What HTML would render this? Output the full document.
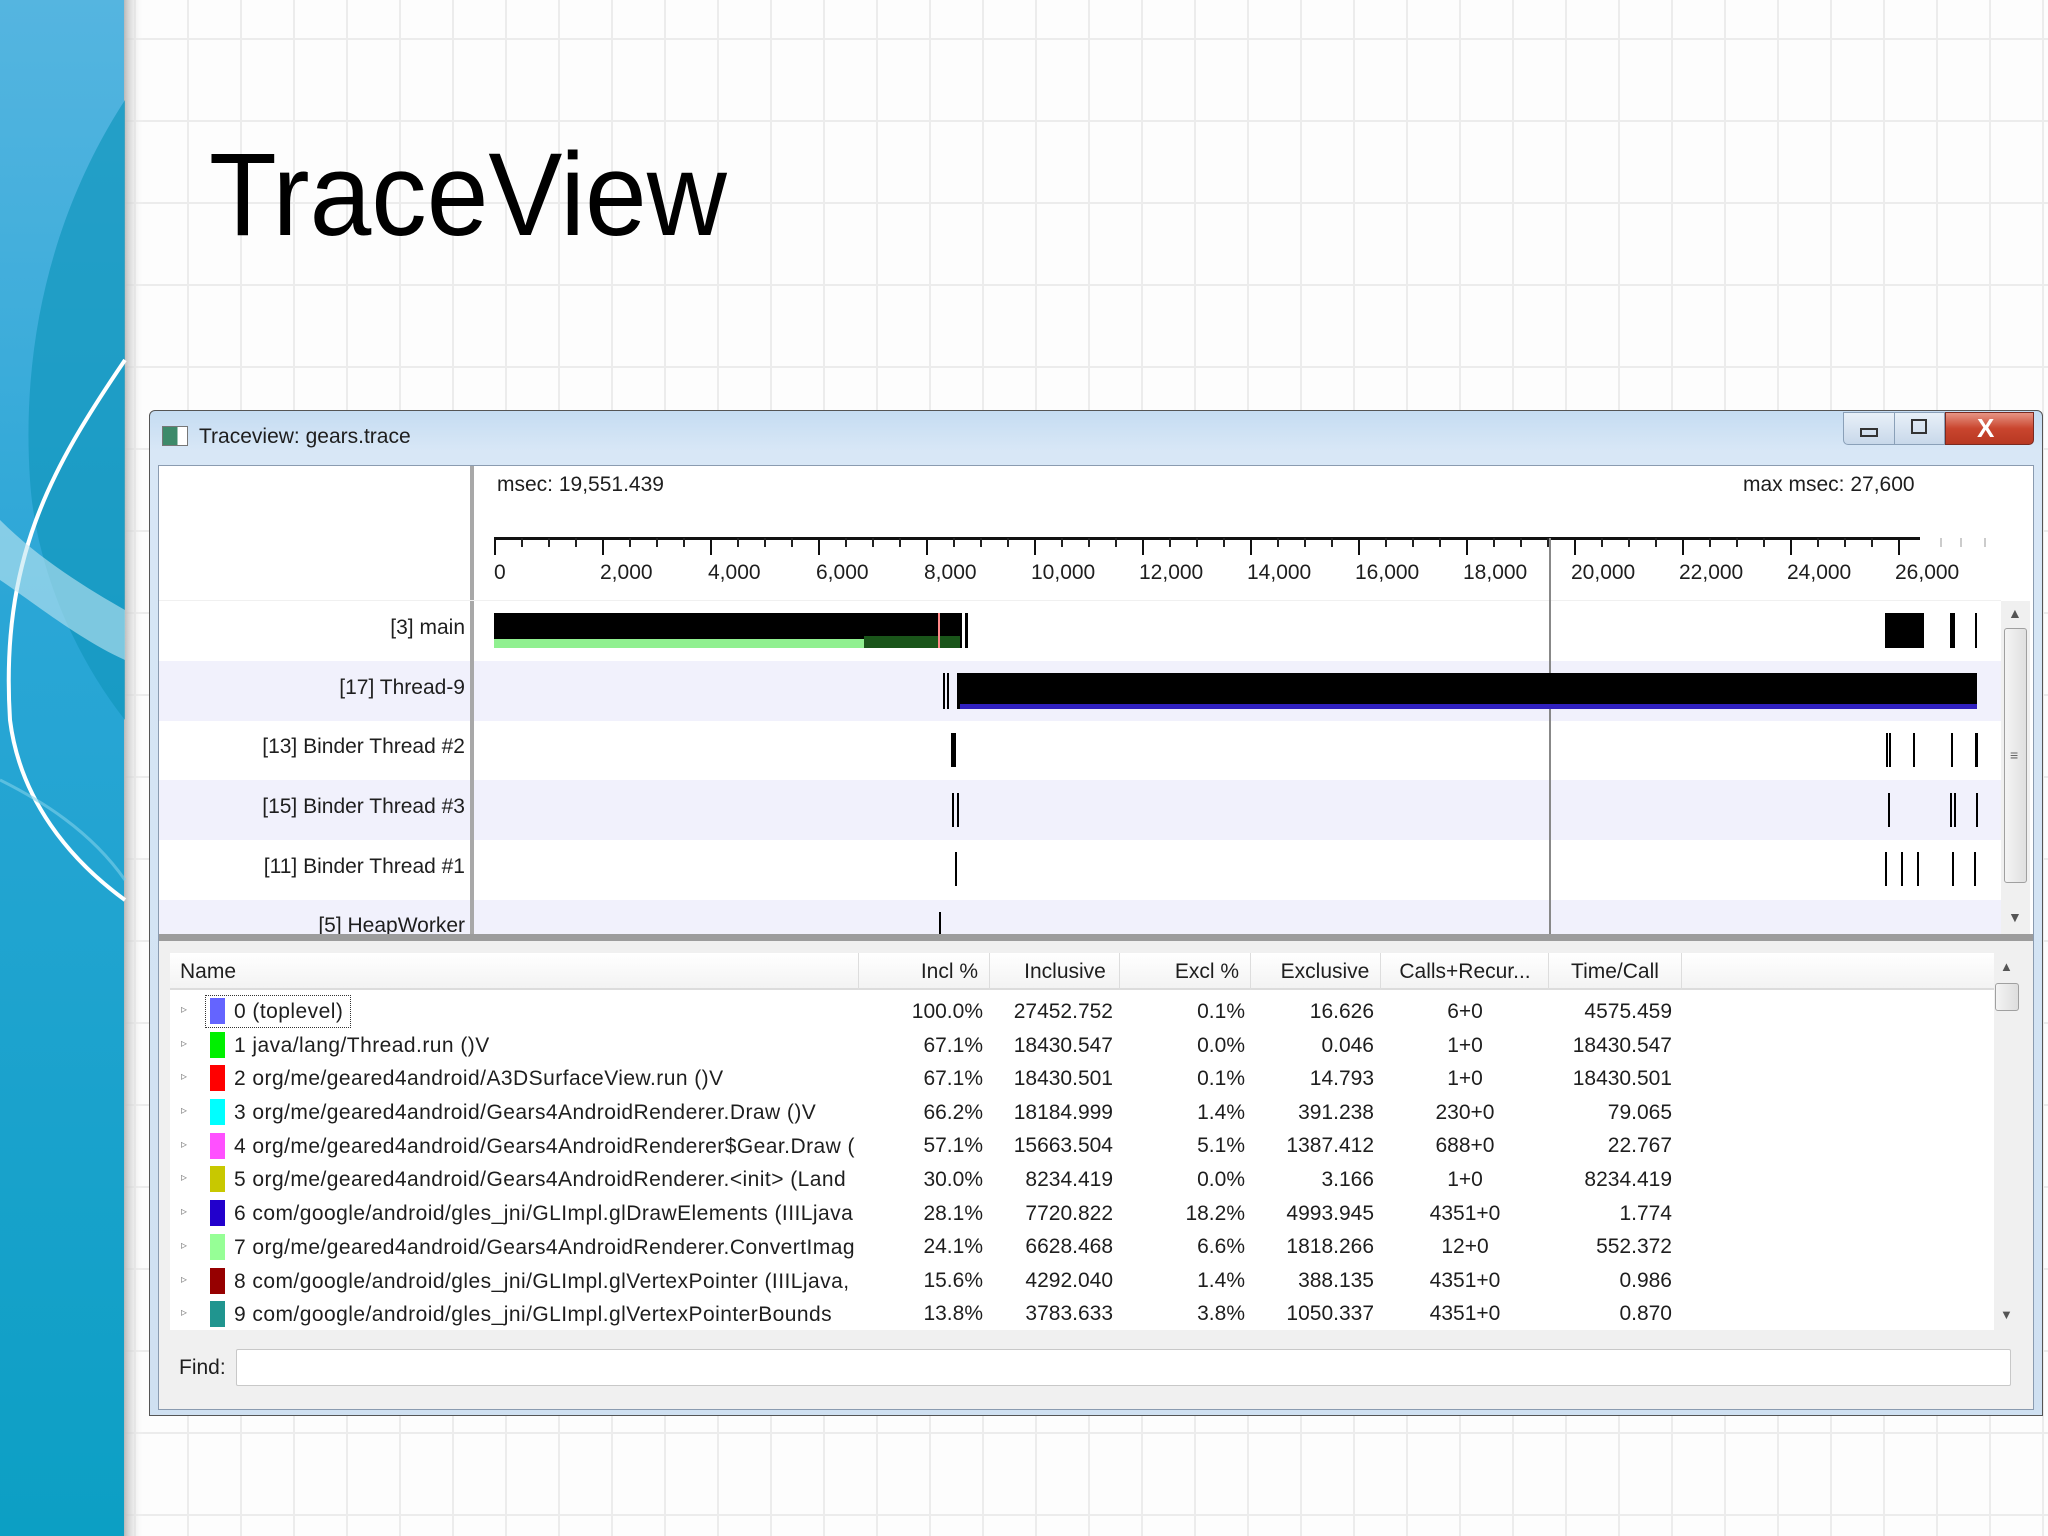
<!DOCTYPE html>
<html><head><meta charset="utf-8"><style>
*{margin:0;padding:0;box-sizing:border-box}
body{width:2048px;height:1536px;position:relative;overflow:hidden;font-family:"Liberation Sans",sans-serif;color:#1e1e1e;
background-color:#fdfdfd;
background-image:linear-gradient(90deg,#ececec 2px,transparent 2px),linear-gradient(0deg,#ececec 2px,transparent 2px);
background-size:53px 82px;background-position:28px 40px}
.a{position:absolute}
.t{position:absolute;font-size:21px;white-space:nowrap;line-height:1}
.r{text-align:right}
.c{text-align:center}
.nm{letter-spacing:.45px}
</style></head><body>
<svg class="a" style="left:0;top:0" width="145" height="1536">
<defs>
<linearGradient id="bg" x1="0" y1="0" x2="0" y2="1"><stop offset="0" stop-color="#55b5e0"/><stop offset=".4" stop-color="#2aa6d6"/><stop offset="1" stop-color="#0c9fc4"/></linearGradient>
<linearGradient id="sh" x1="0" y1="0" x2="1" y2="0"><stop offset="0" stop-color="#bbb"/><stop offset="1" stop-color="#fdfdfd" stop-opacity="0"/></linearGradient>
</defs>
<rect width="125" height="1536" fill="url(#bg)"/>
<rect x="124" width="20" height="1536" fill="url(#sh)"/>
<path d="M125 100 C60 200 20 330 30 480 C35 560 70 650 125 720 L125 100Z" fill="#1297bd" opacity=".7"/>
<path d="M125 360 C50 470 0 560 10 720 C20 800 70 860 125 900" stroke="#fff" stroke-width="4" fill="none"/>
<path d="M0 520 C40 560 90 590 125 610 L125 660 C80 640 30 600 0 580Z" fill="#bfe6f2" opacity=".6"/>
<path d="M125 880 C90 830 40 800 0 780" stroke="#7fd0ea" stroke-width="3" fill="none" opacity=".6"/>
</svg>
<div class="a" style="left:209px;top:136px;font-size:118px;line-height:1;transform:scaleX(.94);transform-origin:left;color:#000">TraceView</div>

<div class="a" style="left:149px;top:410px;width:1894px;height:1006px;background:linear-gradient(#c5dcf2,#d8e7f6 40px,#cfe0f1);border:1px solid #555;border-radius:6px 6px 0 0"></div>
<div class="a" style="left:162px;top:426px;width:26px;height:20px;border:1px solid #777;background:linear-gradient(90deg,#3d8a6a 60%,#fff 60%)"></div>
<div class="t" style="left:199px;top:426px">Traceview: gears.trace</div>
<div class="a" style="left:1843px;top:412px;width:102px;height:33px;border:1px solid #8aa0b8;border-radius:0 0 0 5px;background:linear-gradient(#e8f0f8,#c8d8ea)"></div>
<div class="a" style="left:1894px;top:412px;width:1px;height:33px;background:#8aa0b8"></div>
<div class="a" style="left:1860px;top:428px;width:18px;height:9px;border:2px solid #333"></div>
<div class="a" style="left:1911px;top:419px;width:16px;height:15px;border:2px solid #333"></div>
<div class="a" style="left:1945px;top:412px;width:89px;height:33px;border:1px solid #7a2a20;border-radius:0 0 5px 0;background:linear-gradient(#e79585,#c9452e 50%,#b83822)"></div>
<div class="a" style="left:1977px;top:413px;font-size:26px;font-weight:bold;color:#fff">X</div>

<div class="a" style="left:158px;top:465px;width:1876px;height:945px;background:#f0f0f0;border:1px solid #8a9bb0"></div>
<div class="a" style="left:159px;top:466px;width:1874px;height:468px;background:#fff"></div>
<div class="a" style="left:159px;top:661px;width:1842px;height:60px;background:#f1f1fc"></div>
<div class="a" style="left:159px;top:780px;width:1842px;height:60px;background:#f1f1fc"></div>
<div class="a" style="left:159px;top:900px;width:1842px;height:34px;background:#f1f1fc"></div>
<div class="a" style="left:470px;top:466px;width:4px;height:468px;background:#a8a8a8"></div>
<div class="a" style="left:159px;top:600px;width:1842px;height:1px;background:#f0f0f0"></div>

<div class="t" style="left:497px;top:474px">msec: 19,551.439</div>
<div class="t" style="left:1743px;top:474px">max msec: 27,600</div>

<svg class="a" style="left:0;top:0" width="2048" height="940">
<defs>
<pattern id="mn" x="494" y="0" width="27" height="10" patternUnits="userSpaceOnUse"><rect width="2" height="10" fill="#222"/></pattern>
<pattern id="mj" x="494" y="0" width="108" height="20" patternUnits="userSpaceOnUse"><rect width="2" height="20" fill="#111"/></pattern>
</defs>
<rect x="494" y="537" width="1426" height="3" fill="#111"/>
<rect x="494" y="538" width="1426" height="9" fill="url(#mn)"/>
<rect x="494" y="538" width="1406" height="17" fill="url(#mj)"/>
<g fill="#ccc"><rect x="1940" y="538" width="2" height="9"/><rect x="1960" y="538" width="2" height="9"/><rect x="1984" y="538" width="2" height="9"/></g>
<rect x="1549" y="538" width="2" height="397" fill="#888"/>
<rect x="494" y="613" width="468" height="35" fill="#000"/>
<rect x="494" y="639" width="370" height="9" fill="#90f090"/>
<rect x="864" y="636" width="96" height="12" fill="#3a3" opacity=".5"/>
<rect x="938" y="613" width="2" height="35" fill="#f88"/>
<rect x="965" y="613" width="3" height="35" fill="#000"/>
<rect x="1885" y="613" width="39" height="35" fill="#000"/>
<rect x="1950" y="613" width="5" height="35" fill="#000"/>
<rect x="1975" y="613" width="2" height="35" fill="#000"/>
<rect x="943" y="673" width="2" height="36" fill="#000"/><rect x="947" y="673" width="2" height="36" fill="#000"/>
<rect x="957" y="673" width="1020" height="36" fill="#000"/>
<rect x="960" y="704" width="1017" height="5" fill="#3020c0"/>
<rect x="951" y="733" width="5" height="34" fill="#000"/>
<g fill="#000"><rect x="1886" y="733" width="2" height="34"/><rect x="1889" y="733" width="2" height="34"/><rect x="1913" y="733" width="2" height="34"/><rect x="1951" y="733" width="2" height="34"/><rect x="1975" y="733" width="3" height="34"/></g>
<g fill="#000"><rect x="952" y="793" width="2" height="34"/><rect x="957" y="793" width="2" height="34"/><rect x="1888" y="793" width="2" height="34"/><rect x="1950" y="793" width="2" height="34"/><rect x="1954" y="793" width="2" height="34"/><rect x="1976" y="793" width="2" height="34"/></g>
<g fill="#000"><rect x="955" y="852" width="2" height="34"/><rect x="1885" y="852" width="2" height="34"/><rect x="1901" y="852" width="2" height="34"/><rect x="1917" y="852" width="2" height="34"/><rect x="1952" y="852" width="2" height="34"/><rect x="1974" y="852" width="2" height="34"/></g>
<rect x="939" y="912" width="2" height="22" fill="#000"/>
</svg>
<div class="t" style="left:494px;top:562px">0</div>
<div class="t" style="left:600px;top:562px">2,000</div>
<div class="t" style="left:708px;top:562px">4,000</div>
<div class="t" style="left:816px;top:562px">6,000</div>
<div class="t" style="left:924px;top:562px">8,000</div>
<div class="t" style="left:1031px;top:562px">10,000</div>
<div class="t" style="left:1139px;top:562px">12,000</div>
<div class="t" style="left:1247px;top:562px">14,000</div>
<div class="t" style="left:1355px;top:562px">16,000</div>
<div class="t" style="left:1463px;top:562px">18,000</div>
<div class="t" style="left:1571px;top:562px">20,000</div>
<div class="t" style="left:1679px;top:562px">22,000</div>
<div class="t" style="left:1787px;top:562px">24,000</div>
<div class="t" style="left:1895px;top:562px">26,000</div>

<div class="t r" style="left:200px;width:265px;top:617px">[3] main</div>
<div class="t r" style="left:200px;width:265px;top:677px">[17] Thread-9</div>
<div class="t r" style="left:200px;width:265px;top:736px">[13] Binder Thread #2</div>
<div class="t r" style="left:200px;width:265px;top:796px">[15] Binder Thread #3</div>
<div class="t r" style="left:200px;width:265px;top:856px">[11] Binder Thread #1</div>
<div class="t r" style="left:200px;width:265px;top:915px">[5] HeapWorker</div>

<div class="a" style="left:2001px;top:601px;width:29px;height:333px;background:#f0f0f0"></div>
<div class="a" style="left:2004px;top:628px;width:23px;height:255px;border:1px solid #a0a0a0;border-radius:3px;background:linear-gradient(90deg,#f4f4f4,#e0e0e0)"></div>
<div class="t" style="left:2008px;top:606px;font-size:14px;color:#555">▲</div>
<div class="t" style="left:2008px;top:910px;font-size:14px;color:#555">▼</div>
<div class="t" style="left:2010px;top:748px;font-size:14px;color:#666">≡</div>

<div class="a" style="left:159px;top:934px;width:1874px;height:7px;background:#9c9c9c"></div>

<div class="a" style="left:170px;top:953px;width:1824px;height:377px;background:#fff"></div>
<div class="a" style="left:170px;top:953px;width:1824px;height:37px;background:linear-gradient(#fff,#f3f3f3);border-bottom:2px solid #dcdcdc"></div>
<div class="a" style="left:858px;top:953px;width:1px;height:37px;background:#ddd"></div>
<div class="a" style="left:989px;top:953px;width:1px;height:37px;background:#ddd"></div>
<div class="a" style="left:1119px;top:953px;width:1px;height:37px;background:#ddd"></div>
<div class="a" style="left:1250px;top:953px;width:1px;height:37px;background:#ddd"></div>
<div class="a" style="left:1380px;top:953px;width:1px;height:37px;background:#ddd"></div>
<div class="a" style="left:1548px;top:953px;width:1px;height:37px;background:#ddd"></div>
<div class="a" style="left:1681px;top:953px;width:1px;height:37px;background:#ddd"></div>
<div class="t" style="left:180px;top:961px">Name</div>
<div class="t r" style="left:880px;width:98px;top:961px">Incl %</div>
<div class="t c" style="left:995px;width:140px;top:961px">Inclusive</div>
<div class="t r" style="left:1130px;width:109px;top:961px">Excl %</div>
<div class="t c" style="left:1260px;width:130px;top:961px">Exclusive</div>
<div class="t c" style="left:1382px;width:166px;top:961px">Calls+Recur...</div>
<div class="t c" style="left:1550px;width:130px;top:961px">Time/Call</div>

<div class="a" style="left:205px;top:995px;width:146px;height:33px;border:1px dotted #333"></div>

<div class="a" style="left:170px;top:994px;width:688px;height:340px;overflow:hidden">
<div class="t" style="left:11px;top:9px;font-size:12px;color:#888">▹</div><div class="a" style="left:40px;top:4px;width:15px;height:26px;background:#6464ff"></div><div class="t nm" style="left:64px;top:7px">0 (toplevel)</div>
<div class="t" style="left:11px;top:43px;font-size:12px;color:#888">▹</div><div class="a" style="left:40px;top:38px;width:15px;height:26px;background:#00f000"></div><div class="t nm" style="left:64px;top:41px">1 java/lang/Thread.run ()V</div>
<div class="t" style="left:11px;top:76px;font-size:12px;color:#888">▹</div><div class="a" style="left:40px;top:71px;width:15px;height:26px;background:#ff0000"></div><div class="t nm" style="left:64px;top:74px">2 org/me/geared4android/A3DSurfaceView.run ()V</div>
<div class="t" style="left:11px;top:110px;font-size:12px;color:#888">▹</div><div class="a" style="left:40px;top:105px;width:15px;height:26px;background:#00ffff"></div><div class="t nm" style="left:64px;top:108px">3 org/me/geared4android/Gears4AndroidRenderer.Draw ()V</div>
<div class="t" style="left:11px;top:144px;font-size:12px;color:#888">▹</div><div class="a" style="left:40px;top:139px;width:15px;height:26px;background:#ff50ff"></div><div class="t nm" style="left:64px;top:142px">4 org/me/geared4android/Gears4AndroidRenderer$Gear.Draw (</div>
<div class="t" style="left:11px;top:177px;font-size:12px;color:#888">▹</div><div class="a" style="left:40px;top:172px;width:15px;height:26px;background:#c8c800"></div><div class="t nm" style="left:64px;top:175px">5 org/me/geared4android/Gears4AndroidRenderer.&lt;init&gt; (Land</div>
<div class="t" style="left:11px;top:211px;font-size:12px;color:#888">▹</div><div class="a" style="left:40px;top:206px;width:15px;height:26px;background:#2200cc"></div><div class="t nm" style="left:64px;top:209px">6 com/google/android/gles_jni/GLImpl.glDrawElements (IIILjava</div>
<div class="t" style="left:11px;top:245px;font-size:12px;color:#888">▹</div><div class="a" style="left:40px;top:240px;width:15px;height:26px;background:#96ff96"></div><div class="t nm" style="left:64px;top:243px">7 org/me/geared4android/Gears4AndroidRenderer.ConvertImag</div>
<div class="t" style="left:11px;top:279px;font-size:12px;color:#888">▹</div><div class="a" style="left:40px;top:274px;width:15px;height:26px;background:#960000"></div><div class="t nm" style="left:64px;top:277px">8 com/google/android/gles_jni/GLImpl.glVertexPointer (IIILjava,</div>
<div class="t" style="left:11px;top:312px;font-size:12px;color:#888">▹</div><div class="a" style="left:40px;top:307px;width:15px;height:26px;background:#20958f"></div><div class="t nm" style="left:64px;top:310px">9 com/google/android/gles_jni/GLImpl.glVertexPointerBounds</div>
</div>
<div class="a" style="left:0;top:988px;width:2048px">
<div class="t r" style="left:880px;width:103px;top:7px;line-height:1.6;">100.0%<br>67.1%<br>67.1%<br>66.2%<br>57.1%<br>30.0%<br>28.1%<br>24.1%<br>15.6%<br>13.8%</div>
<div class="t r" style="left:990px;width:123px;top:7px;line-height:1.6;">27452.752<br>18430.547<br>18430.501<br>18184.999<br>15663.504<br>8234.419<br>7720.822<br>6628.468<br>4292.040<br>3783.633</div>
<div class="t r" style="left:1130px;width:115px;top:7px;line-height:1.6;">0.1%<br>0.0%<br>0.1%<br>1.4%<br>5.1%<br>0.0%<br>18.2%<br>6.6%<br>1.4%<br>3.8%</div>
<div class="t r" style="left:1260px;width:114px;top:7px;line-height:1.6;">16.626<br>0.046<br>14.793<br>391.238<br>1387.412<br>3.166<br>4993.945<br>1818.266<br>388.135<br>1050.337</div>
<div class="t c" style="left:1400px;width:130px;top:7px;line-height:1.6;">6+0<br>1+0<br>1+0<br>230+0<br>688+0<br>1+0<br>4351+0<br>12+0<br>4351+0<br>4351+0</div>
<div class="t r" style="left:1550px;width:122px;top:7px;line-height:1.6;">4575.459<br>18430.547<br>18430.501<br>79.065<br>22.767<br>8234.419<br>1.774<br>552.372<br>0.986<br>0.870</div>
</div>

<div class="a" style="left:1994px;top:953px;width:26px;height:377px;background:#f0f0f0"></div>
<div class="a" style="left:1995px;top:983px;width:24px;height:28px;border:1px solid #a0a0a0;border-radius:3px;background:linear-gradient(90deg,#f4f4f4,#ddd)"></div>
<div class="t" style="left:2000px;top:960px;font-size:13px;color:#555">▲</div>
<div class="t" style="left:2000px;top:1308px;font-size:13px;color:#555">▼</div>

<div class="t" style="left:179px;top:1357px">Find:</div>
<div class="a" style="left:236px;top:1349px;width:1775px;height:37px;background:#fff;border:1px solid #c8c8c8;border-radius:2px"></div>
</body></html>
